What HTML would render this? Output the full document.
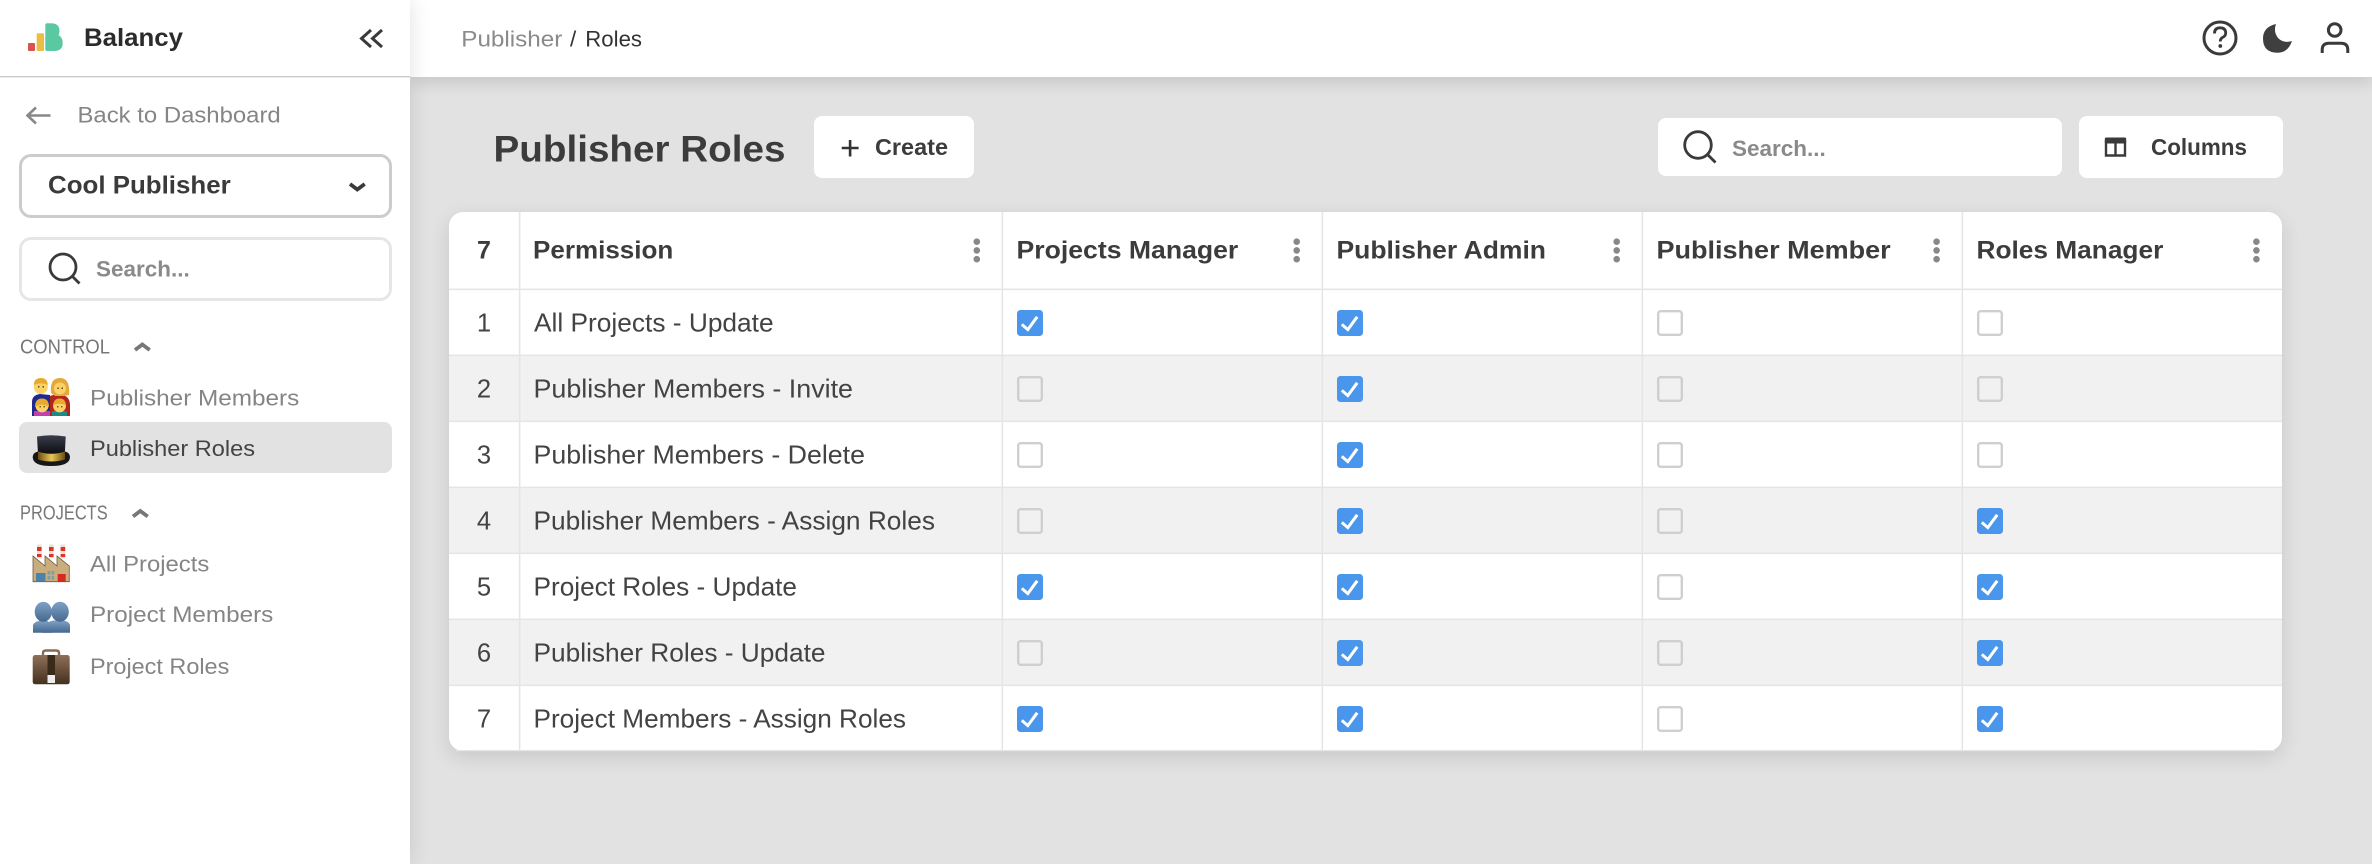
<!DOCTYPE html>
<html lang="en"><head><meta charset="utf-8"><title>Publisher Roles</title>
<style>
html,body{margin:0;padding:0;width:2372px;height:864px;overflow:hidden;background:#e2e2e2;font-family:"Liberation Sans",Arial,sans-serif}
.b{position:absolute;box-sizing:border-box}
svg{position:absolute;left:0;top:0}
text{font-family:"Liberation Sans",Arial,sans-serif}
.c{font-size:25.6px;fill:#434343}
.h{font-size:25px;font-weight:700;fill:#3c3c3c}
.n{font-size:22.4px;fill:#858585}
.s{font-size:20px;fill:#777}
</style></head><body>
<div class="b" style="left:410px;top:0;width:1962px;height:77px;background:#fff;box-shadow:0 5px 16px rgba(0,0,0,.13)"></div>
<div class="b" style="left:0;top:0;width:410px;height:864px;background:#fff;box-shadow:0 0 20px rgba(0,0,0,.12)"></div>
<div class="b" style="left:449px;top:212px;width:1833px;height:539px;background:#fff;border-radius:14px;box-shadow:0 6px 20px rgba(0,0,0,.12)"></div>
<div class="b" style="left:814px;top:116px;width:160px;height:62px;background:#fff;border-radius:8px"></div>
<div class="b" style="left:1658px;top:118px;width:404px;height:58px;background:#fff;border-radius:8px"></div>
<div class="b" style="left:2079px;top:116px;width:204px;height:62px;background:#fff;border-radius:8px"></div>
<div class="b" style="left:19px;top:154px;width:373px;height:64px;background:#fff;border:3px solid #ccc;border-radius:12px"></div>
<div class="b" style="left:19px;top:237px;width:373px;height:64px;background:#fff;border:3px solid #e6e6e6;border-radius:12px"></div>
<div class="b" style="left:19px;top:422px;width:373px;height:51px;background:#e2e2e2;border-radius:8px"></div>
<svg width="2372" height="864" viewBox="0 0 2372 864" xmlns="http://www.w3.org/2000/svg">
<defs>
<linearGradient id="hat" x1="0" y1="0" x2="0" y2="1"><stop offset="0" stop-color="#3a3d4a"/><stop offset="1" stop-color="#0c0c10"/></linearGradient>
<linearGradient id="gold" x1="0" y1="0" x2="1" y2="0"><stop offset="0" stop-color="#6b4e10"/><stop offset=".5" stop-color="#e8c558"/><stop offset="1" stop-color="#6b4e10"/></linearGradient>
<linearGradient id="bust" x1="0" y1="0" x2="0" y2="1"><stop offset="0" stop-color="#7da2c8"/><stop offset="1" stop-color="#47688f"/></linearGradient>
<linearGradient id="case" x1="0" y1="0" x2="0" y2="1"><stop offset="0" stop-color="#8f7059"/><stop offset="1" stop-color="#43301f"/></linearGradient>
<g id="on"><rect width="26" height="26" rx="3.5" fill="#4a96ec"/><path d="M4.8 14.4 L10.8 19.6 L20.2 6.8" fill="none" stroke="#fff" stroke-width="3"/></g>
<rect id="off" x="1.2" y="1.2" width="23.6" height="23.6" rx="2.5" fill="none" stroke="#cfcfcf" stroke-width="2.4"/>
<g id="dots" fill="#888"><circle cx="0" cy="241.7" r="3.3"/><circle cx="0" cy="250.4" r="3.3"/><circle cx="0" cy="259.2" r="3.3"/></g>
</defs>

<!-- logo -->
<rect x="28" y="43" width="7" height="8" rx="1" fill="#d9534f"/>
<rect x="36.7" y="33.3" width="7.3" height="17.7" rx="1" fill="#ebbd42"/>
<path d="M45.3 25 Q45.3 23.3 47 23.3 H51 Q59.5 23.3 59.5 31 Q59.5 33.5 58.5 35 Q62.7 37.5 62.7 43 Q62.7 51 54 51 H47 Q45.3 51 45.3 49.3Z" fill="#5ac8a0"/>
<text x="84" y="46" font-size="25.4" font-weight="700" fill="#2b2b2b" textLength="99" lengthAdjust="spacingAndGlyphs">Balancy</text>
<path d="M371 30 L361.5 38.5 L371 47 M382 30 L372.5 38.5 L382 47" fill="none" stroke="#3a3a3a" stroke-width="3"/>
<rect x="0" y="76" width="410" height="1.4" fill="#ccc"/>

<!-- back -->
<path d="M50.5 115.5 H28 M36 107.5 L27.5 115.5 L36 123.5" fill="none" stroke="#888" stroke-width="2.6"/>
<text x="77.5" y="122.7" class="n" textLength="203.2" lengthAdjust="spacingAndGlyphs">Back to Dashboard</text>

<text x="48" y="193.3" font-size="25" font-weight="700" fill="#3a3a3a" textLength="182.7" lengthAdjust="spacingAndGlyphs">Cool Publisher</text>
<path d="M350 184 L357.3 189.5 L364.7 184" fill="none" stroke="#3a3a3a" stroke-width="3.8"/>

<circle cx="63" cy="267" r="13" fill="none" stroke="#3a3a3a" stroke-width="2.8"/>
<path d="M72.5 276.5 L79.5 283.5" stroke="#3a3a3a" stroke-width="2.8"/>
<text x="96" y="276.7" font-size="22.4" font-weight="700" fill="#8a8a8a" textLength="93.7" lengthAdjust="spacingAndGlyphs">Search...</text>

<!-- sections -->
<text x="20" y="353.3" class="s" textLength="90" lengthAdjust="spacingAndGlyphs">CONTROL</text>
<path d="M135 350 L142.3 344.5 L149.7 350" fill="none" stroke="#777" stroke-width="3.8"/>
<text x="20" y="519.3" class="s" textLength="87.7" lengthAdjust="spacingAndGlyphs">PROJECTS</text>
<path d="M133 516.5 L140.3 511 L147.7 516.5" fill="none" stroke="#777" stroke-width="3.8"/>

<!-- family -->
<path d="M32 416 V402 Q32 395 40 394 L50 395 V416Z" fill="#1f2a8c"/>
<path d="M50 416 V396 Q60 392 67 397 Q70 400 70 405 V416Z" fill="#b3261e"/>
<circle cx="40.8" cy="387" r="7" fill="#fbd266"/><path d="M33.8 385 Q34 378 41 378 Q47.5 378 47.8 385 Q41 381.5 33.8 385Z" fill="#e8a92f"/>
<rect x="38" y="386" width="1.5" height="1.5" fill="#6b4a1f"/><rect x="42.5" y="386" width="1.5" height="1.5" fill="#6b4a1f"/>
<path d="M51 393 Q49.5 378 60 378 Q70.5 378 69 395 L64 396 H55Z" fill="#e3a93a"/><circle cx="60" cy="388.5" r="6" fill="#fbd266"/>
<rect x="57.3" y="387.5" width="1.5" height="1.5" fill="#6b4a1f"/><rect x="61.5" y="387.5" width="1.5" height="1.5" fill="#6b4a1f"/>
<rect x="34" y="411" width="16" height="5" fill="#c23fb0"/><rect x="52" y="411" width="15" height="5" fill="#1d8a8a"/>
<circle cx="42" cy="406" r="6.4" fill="#fbd266"/><path d="M35 407 Q35 398.5 42 398.5 Q49 398.5 49 407 Q42 402.5 35 407Z" fill="#e8a92f"/>
<rect x="39.5" y="406" width="1.4" height="1.4" fill="#6b4a1f"/><rect x="43.5" y="406" width="1.4" height="1.4" fill="#6b4a1f"/>
<circle cx="59.5" cy="406" r="6.4" fill="#fbd266"/><path d="M53 405 Q54 398.5 59.5 398.5 Q65.5 398.5 66 405 Q59.5 402.5 53 405Z" fill="#e8a92f"/>
<rect x="57" y="406" width="1.4" height="1.4" fill="#6b4a1f"/><rect x="61" y="406" width="1.4" height="1.4" fill="#6b4a1f"/>

<!-- hat -->
<path d="M37 436.5 Q51 434 65.7 436.5 L64.8 454 H38Z" fill="url(#hat)"/>
<path d="M32.7 457 Q33 452.5 38 451.5 L38 456 Q51 461 65 456 L65 451.5 Q69.7 452.5 70 457 Q70 466 51 466 Q32.7 466 32.7 457Z" fill="#17171a"/>
<path d="M38 451.5 Q51 456 65 451.5 V459.5 Q51 463.5 38 459.5Z" fill="url(#gold)"/>

<!-- factory -->
<rect x="37" y="544.5" width="4.6" height="14" fill="#e9e0d2"/><rect x="37" y="547" width="4.6" height="4" fill="#d8362a"/><rect x="37" y="554" width="4.6" height="3" fill="#d8362a"/>
<rect x="49" y="544.5" width="4.6" height="14" fill="#e9e0d2"/><rect x="49" y="547" width="4.6" height="4" fill="#d8362a"/><rect x="49" y="554" width="4.6" height="3" fill="#d8362a"/>
<rect x="60.6" y="544.5" width="4.6" height="14" fill="#e9e0d2"/><rect x="60.6" y="547" width="4.6" height="4" fill="#d8362a"/><rect x="60.6" y="554" width="4.6" height="3" fill="#d8362a"/>
<path d="M33 581.7 V556 L45 566 V556 L57 566 V556 L69.3 566 V581.7Z" fill="#c9ad7c" stroke="#6e5b44" stroke-width=".8"/>
<rect x="36" y="573" width="9.5" height="8.7" fill="#4d82a8"/><rect x="47.5" y="571" width="2.6" height="3.6" fill="#7a9db0"/><rect x="51.5" y="571" width="2.6" height="3.6" fill="#7a9db0"/><rect x="47.5" y="576" width="2.6" height="3.6" fill="#7a9db0"/><rect x="51.5" y="576" width="2.6" height="3.6" fill="#7a9db0"/>
<rect x="57.7" y="574" width="8" height="7.7" fill="#d8281f"/>

<!-- busts -->
<path d="M33 632.7 V625 Q34 622 40 620.5 L46 620.5 Q52 622 52 632.7Z" fill="url(#bust)"/>
<ellipse cx="43.3" cy="611.8" rx="8.6" ry="10" fill="url(#bust)"/>
<path d="M42 632.7 Q42 623 53 620.5 L58 620.5 L64 620.5 Q69.5 622 70 625 V632.7Z" fill="url(#bust)"/>
<ellipse cx="60" cy="611.8" rx="8.8" ry="10" fill="url(#bust)"/>

<!-- briefcase -->
<path d="M43 657 V653 Q43 650.5 46 650.5 H56 Q59 650.5 59 653 V657" fill="none" stroke="#8a6a50" stroke-width="2.4"/>
<rect x="32.7" y="655" width="37" height="29.3" rx="2.5" fill="url(#case)"/>
<rect x="47.5" y="655" width="7.5" height="23" fill="#3a2a1c"/>
<rect x="47.5" y="675" width="7.5" height="8" fill="#eee"/>

<!-- nav labels -->
<text x="90" y="405.3" class="n" textLength="209.3" lengthAdjust="spacingAndGlyphs">Publisher Members</text>
<text x="90" y="456" class="n" style="fill:#444" textLength="165" lengthAdjust="spacingAndGlyphs">Publisher Roles</text>
<text x="90" y="571.3" class="n" textLength="119.3" lengthAdjust="spacingAndGlyphs">All Projects</text>
<text x="90" y="622" class="n" textLength="183.3" lengthAdjust="spacingAndGlyphs">Project Members</text>
<text x="90" y="674" class="n" textLength="139.3" lengthAdjust="spacingAndGlyphs">Project Roles</text>

<!-- breadcrumb -->
<text x="461.3" y="46.7" class="n" style="fill:#8a8a8a" textLength="101" lengthAdjust="spacingAndGlyphs">Publisher</text>
<text x="570" y="46.7" font-size="22.4" fill="#333">/</text>
<text x="585.3" y="46.7" font-size="22.4" fill="#333" textLength="56.7" lengthAdjust="spacingAndGlyphs">Roles</text>

<!-- top right icons -->
<circle cx="2220" cy="38" r="16" fill="none" stroke="#3a3a3a" stroke-width="3"/>
<path d="M2214.5 33.5 Q2214.5 27.8 2220 27.8 Q2225.7 27.8 2225.7 33 Q2225.7 36 2222.5 37.5 Q2220.3 38.7 2220.3 41.5" fill="none" stroke="#3a3a3a" stroke-width="2.8"/>
<circle cx="2220.3" cy="46" r="1.9" fill="#3a3a3a"/>
<path d="M2276 24 Q2263 27 2263 38.5 Q2263 52.7 2277.5 52.7 Q2288 52.7 2292 41 Q2284 43.5 2278.5 38.5 Q2273 32 2276 24Z" fill="#3f3f3f"/>
<circle cx="2334.7" cy="30" r="6.3" fill="none" stroke="#3a3a3a" stroke-width="3"/>
<path d="M2322.2 53 V50 Q2322.2 43.3 2329 43.3 H2341 Q2347.8 43.3 2347.8 50 V53" fill="none" stroke="#3a3a3a" stroke-width="3"/>

<!-- title bar -->
<text x="493.5" y="161.7" font-size="37" font-weight="700" fill="#3c3c3c" textLength="292" lengthAdjust="spacingAndGlyphs">Publisher Roles</text>
<path d="M841.7 148 H858.6 M850.1 140 V156.5" stroke="#333" stroke-width="2.6"/>
<text x="875" y="155" font-size="23" font-weight="700" fill="#3c3c3c" textLength="73" lengthAdjust="spacingAndGlyphs">Create</text>
<circle cx="1698" cy="145" r="13.3" fill="none" stroke="#3a3a3a" stroke-width="2.8"/>
<path d="M1707.5 154.5 L1715.5 162.5" stroke="#3a3a3a" stroke-width="2.8"/>
<text x="1732" y="156" font-size="22.4" font-weight="700" fill="#8a8a8a" textLength="93.8" lengthAdjust="spacingAndGlyphs">Search...</text>
<path d="M2106 142 H2125 V155.5 H2106Z M2115.5 142 V155.5" fill="none" stroke="#3a3a3a" stroke-width="2.4"/>
<rect x="2104.8" y="137.5" width="21.4" height="6" rx="1.5" fill="#3a3a3a"/>
<text x="2151" y="155" font-size="23" font-weight="700" fill="#3c3c3c" textLength="96" lengthAdjust="spacingAndGlyphs">Columns</text>

<!-- table stripes -->
<rect x="449" y="355" width="1833" height="66" fill="#f1f1f1"/>
<rect x="449" y="487" width="1833" height="66" fill="#f1f1f1"/>
<rect x="449" y="619" width="1833" height="66" fill="#f1f1f1"/>
<!-- grid -->
<g fill="#e5e5e5">
<rect x="449" y="288.6" width="1833" height="1.5"/><rect x="449" y="354.6" width="1833" height="1.5"/><rect x="449" y="420.6" width="1833" height="1.5"/><rect x="449" y="486.6" width="1833" height="1.5"/><rect x="449" y="552.6" width="1833" height="1.5"/><rect x="449" y="618.6" width="1833" height="1.5"/><rect x="449" y="684.6" width="1833" height="1.5"/><rect x="456" y="750" width="1819" height="1.2"/>
<rect x="518.9" y="212" width="1.5" height="539"/><rect x="1001.6" y="212" width="1.5" height="539"/><rect x="1321.6" y="212" width="1.5" height="539"/><rect x="1641.6" y="212" width="1.5" height="539"/><rect x="1961.6" y="212" width="1.5" height="539"/>
</g>

<!-- table head -->
<text x="484" y="258.3" text-anchor="middle" class="h">7</text>
<text x="533" y="258.3" class="h" textLength="140.3" lengthAdjust="spacingAndGlyphs">Permission</text>
<text x="1016.5" y="258.3" class="h" textLength="221.8" lengthAdjust="spacingAndGlyphs">Projects Manager</text>
<text x="1336.5" y="258.3" class="h" textLength="209.5" lengthAdjust="spacingAndGlyphs">Publisher Admin</text>
<text x="1656.5" y="258.3" class="h" textLength="234.2" lengthAdjust="spacingAndGlyphs">Publisher Member</text>
<text x="1976.5" y="258.3" class="h" textLength="186.8" lengthAdjust="spacingAndGlyphs">Roles Manager</text>
<use href="#dots" x="976.8"/><use href="#dots" x="1296.7"/><use href="#dots" x="1616.7"/><use href="#dots" x="1936.6"/><use href="#dots" x="2256.4"/>

<!-- rows -->
<g class="c" text-anchor="middle">
<text x="484" y="331.7" class="c">1</text><text x="484" y="397.7" class="c">2</text><text x="484" y="463.7" class="c">3</text><text x="484" y="529.7" class="c">4</text><text x="484" y="595.7" class="c">5</text><text x="484" y="661.7" class="c">6</text><text x="484" y="727.7" class="c">7</text>
</g>
<text x="534" y="331.7" class="c" textLength="239.6" lengthAdjust="spacingAndGlyphs">All Projects - Update</text>
<text x="533.5" y="397.7" class="c" textLength="319.5" lengthAdjust="spacingAndGlyphs">Publisher Members - Invite</text>
<text x="533.5" y="463.7" class="c" textLength="331.5" lengthAdjust="spacingAndGlyphs">Publisher Members - Delete</text>
<text x="533.5" y="529.7" class="c" textLength="401.5" lengthAdjust="spacingAndGlyphs">Publisher Members - Assign Roles</text>
<text x="533.5" y="595.7" class="c" textLength="263.5" lengthAdjust="spacingAndGlyphs">Project Roles - Update</text>
<text x="533.5" y="661.7" class="c" textLength="292" lengthAdjust="spacingAndGlyphs">Publisher Roles - Update</text>
<text x="533.5" y="727.7" class="c" textLength="372.5" lengthAdjust="spacingAndGlyphs">Project Members - Assign Roles</text>

<!-- checkboxes -->
<use href="#on" x="1017" y="310"/><use href="#on" x="1337" y="310"/><use href="#off" x="1657" y="310"/><use href="#off" x="1977" y="310"/>
<use href="#off" x="1017" y="376"/><use href="#on" x="1337" y="376"/><use href="#off" x="1657" y="376"/><use href="#off" x="1977" y="376"/>
<use href="#off" x="1017" y="442"/><use href="#on" x="1337" y="442"/><use href="#off" x="1657" y="442"/><use href="#off" x="1977" y="442"/>
<use href="#off" x="1017" y="508"/><use href="#on" x="1337" y="508"/><use href="#off" x="1657" y="508"/><use href="#on" x="1977" y="508"/>
<use href="#on" x="1017" y="574"/><use href="#on" x="1337" y="574"/><use href="#off" x="1657" y="574"/><use href="#on" x="1977" y="574"/>
<use href="#off" x="1017" y="640"/><use href="#on" x="1337" y="640"/><use href="#off" x="1657" y="640"/><use href="#on" x="1977" y="640"/>
<use href="#on" x="1017" y="706"/><use href="#on" x="1337" y="706"/><use href="#off" x="1657" y="706"/><use href="#on" x="1977" y="706"/>
</svg>
</body></html>
